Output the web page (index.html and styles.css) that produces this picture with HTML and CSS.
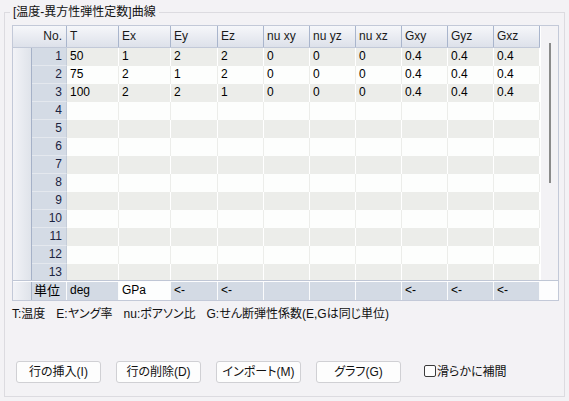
FILE: index.html
```html
<!DOCTYPE html>
<html lang="ja">
<head>
<meta charset="utf-8">
<title>温度-異方性弾性定数</title>
<link rel="stylesheet" href="styles.css">
</head>
<body>
<fieldset class="group">
  <legend class="title">[温度-異方性弾性定数]曲線</legend>
  <div class="grid">
    <div class="main">
      <div class="table">
        <div class="hrow">
          <div class="hcell c-no">No.</div>
          <div class="hcell w52">T</div>
          <div class="hcell w52">Ex</div>
          <div class="hcell w47">Ey</div>
          <div class="hcell w46">Ez</div>
          <div class="hcell w46">nu xy</div>
          <div class="hcell w46">nu yz</div>
          <div class="hcell w46">nu xz</div>
          <div class="hcell w46">Gxy</div>
          <div class="hcell w46">Gyz</div>
          <div class="hcell w46">Gxz</div>
        </div>
        <div class="row odd"><div class="strip"></div><div class="num">1</div><div class="cell w52">50</div><div class="cell w52">1</div><div class="cell w47">2</div><div class="cell w46">2</div><div class="cell w46">0</div><div class="cell w46">0</div><div class="cell w46">0</div><div class="cell w46">0.4</div><div class="cell w46">0.4</div><div class="cell w46">0.4</div></div>
        <div class="row"><div class="strip"></div><div class="num">2</div><div class="cell w52">75</div><div class="cell w52">2</div><div class="cell w47">1</div><div class="cell w46">2</div><div class="cell w46">0</div><div class="cell w46">0</div><div class="cell w46">0</div><div class="cell w46">0.4</div><div class="cell w46">0.4</div><div class="cell w46">0.4</div></div>
        <div class="row odd"><div class="strip"></div><div class="num">3</div><div class="cell w52">100</div><div class="cell w52">2</div><div class="cell w47">2</div><div class="cell w46">1</div><div class="cell w46">0</div><div class="cell w46">0</div><div class="cell w46">0</div><div class="cell w46">0.4</div><div class="cell w46">0.4</div><div class="cell w46">0.4</div></div>
        <div class="row"><div class="strip"></div><div class="num">4</div><div class="cell w52"></div><div class="cell w52"></div><div class="cell w47"></div><div class="cell w46"></div><div class="cell w46"></div><div class="cell w46"></div><div class="cell w46"></div><div class="cell w46"></div><div class="cell w46"></div><div class="cell w46"></div></div>
        <div class="row odd"><div class="strip"></div><div class="num">5</div><div class="cell w52"></div><div class="cell w52"></div><div class="cell w47"></div><div class="cell w46"></div><div class="cell w46"></div><div class="cell w46"></div><div class="cell w46"></div><div class="cell w46"></div><div class="cell w46"></div><div class="cell w46"></div></div>
        <div class="row"><div class="strip"></div><div class="num">6</div><div class="cell w52"></div><div class="cell w52"></div><div class="cell w47"></div><div class="cell w46"></div><div class="cell w46"></div><div class="cell w46"></div><div class="cell w46"></div><div class="cell w46"></div><div class="cell w46"></div><div class="cell w46"></div></div>
        <div class="row odd"><div class="strip"></div><div class="num">7</div><div class="cell w52"></div><div class="cell w52"></div><div class="cell w47"></div><div class="cell w46"></div><div class="cell w46"></div><div class="cell w46"></div><div class="cell w46"></div><div class="cell w46"></div><div class="cell w46"></div><div class="cell w46"></div></div>
        <div class="row"><div class="strip"></div><div class="num">8</div><div class="cell w52"></div><div class="cell w52"></div><div class="cell w47"></div><div class="cell w46"></div><div class="cell w46"></div><div class="cell w46"></div><div class="cell w46"></div><div class="cell w46"></div><div class="cell w46"></div><div class="cell w46"></div></div>
        <div class="row odd"><div class="strip"></div><div class="num">9</div><div class="cell w52"></div><div class="cell w52"></div><div class="cell w47"></div><div class="cell w46"></div><div class="cell w46"></div><div class="cell w46"></div><div class="cell w46"></div><div class="cell w46"></div><div class="cell w46"></div><div class="cell w46"></div></div>
        <div class="row"><div class="strip"></div><div class="num">10</div><div class="cell w52"></div><div class="cell w52"></div><div class="cell w47"></div><div class="cell w46"></div><div class="cell w46"></div><div class="cell w46"></div><div class="cell w46"></div><div class="cell w46"></div><div class="cell w46"></div><div class="cell w46"></div></div>
        <div class="row odd"><div class="strip"></div><div class="num">11</div><div class="cell w52"></div><div class="cell w52"></div><div class="cell w47"></div><div class="cell w46"></div><div class="cell w46"></div><div class="cell w46"></div><div class="cell w46"></div><div class="cell w46"></div><div class="cell w46"></div><div class="cell w46"></div></div>
        <div class="row"><div class="strip"></div><div class="num">12</div><div class="cell w52"></div><div class="cell w52"></div><div class="cell w47"></div><div class="cell w46"></div><div class="cell w46"></div><div class="cell w46"></div><div class="cell w46"></div><div class="cell w46"></div><div class="cell w46"></div><div class="cell w46"></div></div>
        <div class="row odd"><div class="strip"></div><div class="num">13</div><div class="cell w52"></div><div class="cell w52"></div><div class="cell w47"></div><div class="cell w46"></div><div class="cell w46"></div><div class="cell w46"></div><div class="cell w46"></div><div class="cell w46"></div><div class="cell w46"></div><div class="cell w46"></div></div>
      </div>
      <div class="vscroll"><div class="thumb"></div></div>
    </div>
    <div class="units">
      <div class="strip"></div>
      <div class="ucell num-u">単位</div>
      <div class="ucell w52">deg</div>
      <div class="ucell w52 edit">GPa</div>
      <div class="ucell w47">&lt;-</div>
      <div class="ucell w46">&lt;-</div>
      <div class="ucell w46"></div>
      <div class="ucell w46"></div>
      <div class="ucell w46"></div>
      <div class="ucell w46">&lt;-</div>
      <div class="ucell w46">&lt;-</div>
      <div class="ucell w46">&lt;-</div>
    </div>
  </div>
  <p class="note"><span>T:温度</span><span>E:ヤング率</span><span>nu:ポアソン比</span><span>G:せん断弾性係数(E,Gは同じ単位)</span></p>
  <div class="actions">
    <button class="btn" type="button">行の挿入(I)</button>
    <button class="btn" type="button">行の削除(D)</button>
    <button class="btn" type="button">インポート(M)</button>
    <button class="btn" type="button">グラフ(G)</button>
    <label class="check"><span class="box"></span>滑らかに補間</label>
  </div>
</fieldset>
</body>
</html>
```

FILE: styles.css
```css
* { box-sizing: border-box; }
html, body {
  margin: 0;
  padding: 0;
  background: #f3f2f5;
}
body {
  font-family: "Liberation Sans", "Noto Sans CJK JP", sans-serif;
  font-size: 12px;
  color: #000;
  width: 569px;
  height: 401px;
  overflow: hidden;
}
.group {
  margin: 5px 4px 0 4px;
  padding: 6px 0 13px 7px;
  border: 1px solid #dcdbe0;
  min-width: 0;
}
.title {
  padding: 0 3px;
  margin-left: -2px;
  line-height: 14px;
  font-size: 12px;
  font-family: "Liberation Sans", "Noto Sans CJK JP", sans-serif;
  color: #111;
}
.grid {
  width: 547px;
  border: 1px solid #c3c9d8;
  background: #f3f2f5;
}
.main {
  display: flex;
  height: 254px;
  overflow: hidden;
}
.table {
  width: 527px;
  flex: none;
}
.hrow {
  display: flex;
  height: 22px;
  background: linear-gradient(#f6f7fa, #dde1ea);
  border-bottom: 1px solid #c2c9d8;
}
.hcell {
  height: 21px;
  line-height: 21px;
  padding-left: 3px;
  border-right: 1px solid #a9b5cc;
  color: #1a1a1a;
  white-space: nowrap;
  overflow: hidden;
}
.hcell.c-no {
  width: 54px;
  text-align: right;
  padding-right: 4px;
}
.w52 { width: 52px; flex: none; }
.w47 { width: 47px; flex: none; }
.w46 { width: 46px; flex: none; }
.row {
  display: flex;
  height: 18px;
  background: #fdfefd;
}
.row.odd { background: #ecedea; }
.strip {
  width: 19px;
  flex: none;
  background: linear-gradient(90deg, #f2f3f7, #dfe3ea);
  border-right: 1px solid #a6b2c8;
}
.num {
  width: 35px;
  flex: none;
  background: #d4dbe5;
  border-right: 1px solid #c5cdd9;
  border-bottom: 1px solid #e4e8ee;
  text-align: right;
  padding-right: 4px;
  line-height: 17px;
  color: #1b2340;
}
.cell {
  line-height: 17px;
  padding-left: 3px;
  border-right: 1px solid #ecedea;
  white-space: nowrap;
}
.row.odd .cell { border-right-color: #ffffff; }
.vscroll {
  width: 18px;
  flex: none;
  padding: 17px 0 0 8px;
  border-left: 1px solid #ffffff;
}
.thumb {
  width: 2px;
  height: 140px;
  background: #8a8a8a;
}
.units {
  display: flex;
  height: 20px;
  border-top: 1px solid #bfc6d5;
  padding-top: 1px;
  background: #fdfdfe;
}
.units .strip { height: 18px; }
.ucell {
  height: 18px;
  line-height: 17px;
  padding-left: 3px;
  background: #d3dae4;
  border-right: 1px solid #fafbfc;
  white-space: nowrap;
}
.ucell.num-u {
  width: 35px;
  flex: none;
  padding-left: 2px;
  font-size: 13px;
}
.ucell.edit { background: #fdfefe; }
.note {
  margin: 6px 0 0 0;
  line-height: 14px;
  font-feature-settings: "palt";
  color: #111;
}
.note span { margin-right: 11px; }
.actions {
  display: flex;
  align-items: center;
  margin-top: 40px;
  padding-left: 4px;
  gap: 15px;
}
.btn {
  width: 85px;
  height: 22px;
  padding: 0;
  border: 1px solid #d0d0d4;
  border-radius: 3px;
  background: #fdfdfd;
  font-family: "Liberation Sans", "Noto Sans CJK JP", sans-serif;
  font-size: 12px;
  font-feature-settings: "palt";
  color: #111;
  line-height: 20px;
}
.check {
  display: flex;
  align-items: center;
  margin-left: 8px;
  margin-top: -3px;
  font-feature-settings: "palt";
  color: #111;
}
.box {
  width: 12px;
  height: 12px;
  border: 1px solid #3a3a3a;
  border-radius: 2px;
  background: #fdfdfd;
  margin-right: 1px;
}
```
